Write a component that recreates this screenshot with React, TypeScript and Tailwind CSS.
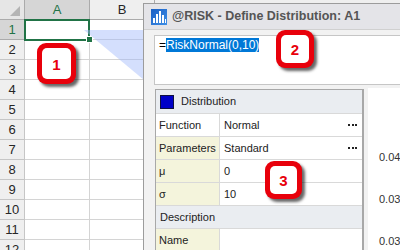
import React from 'react';

const sheetRows = [1, 2, 3, 4, 5, 6, 7, 8, 9, 10, 11, 12];

const props = [
  { label: 'Function', value: 'Normal', more: true, plain: true },
  { label: 'Parameters', value: 'Standard', more: true },
  { label: 'μ', value: '0' },
  { label: 'σ', value: '10' },
];

function Callout({ n, className }: { n: string; className: string }) {
  return (
    <div
      className={`absolute rounded-[9px] bg-[#e8000b] p-[5px] shadow-[3px_3px_3px_rgba(0,0,0,0.6)] ${className}`}
    >
      <div className="flex h-full w-full items-center justify-center rounded-[5px] bg-white pt-[3px] text-[15px] font-bold text-[#e8000b]">
        {n}
      </div>
    </div>
  );
}

function RiskIcon() {
  return (
    <svg width="16" height="16" viewBox="0 0 16 16">
      <defs>
        <linearGradient id="rk" x1="0" y1="0" x2="1" y2="1">
          <stop offset="0" stopColor="#1a5fc4" />
          <stop offset="1" stopColor="#3f8fe6" />
        </linearGradient>
      </defs>
      <rect width="16" height="16" fill="url(#rk)" />
      <rect x="2" y="9" width="2" height="5" fill="#fff" />
      <rect x="5" y="5" width="2" height="9" fill="#fff" />
      <rect x="8" y="2" width="2" height="12" fill="#fff" />
      <rect x="11" y="6" width="2" height="8" fill="#fff" />
      <rect x="14" y="10" width="1" height="4" fill="#fff" />
    </svg>
  );
}

function Dots() {
  return (
    <div className="flex gap-[1.5px]">
      <div className="h-[2px] w-[2px] bg-[#222]" />
      <div className="h-[2px] w-[2px] bg-[#222]" />
      <div className="h-[2px] w-[2px] bg-[#222]" />
    </div>
  );
}

export default function App() {
  return (
    <div className="relative h-[250px] w-[400px] overflow-hidden bg-white font-['Liberation_Sans',Arial,sans-serif]">
      {/* worksheet */}
      <div className="flex h-[20px] border-b border-[#ababab] text-[13px] leading-[19px]">
        <div className="relative w-[25px] border-r border-[#ababab] bg-[#e6e6e6]">
          <div className="absolute bottom-[3px] right-[4px] h-0 w-0 border-b-[10px] border-l-[10px] border-b-[#b4b4b4] border-l-transparent" />
        </div>
        <div className="w-[65px] border-r border-[#ababab] bg-[#d6d6d6] text-center text-[#217346]">A</div>
        <div className="w-[65px] border-r border-[#ababab] bg-[#efefef] text-center text-[#262626]">B</div>
        <div className="flex-1 bg-[#efefef]" />
      </div>
      {sheetRows.map((r) => (
        <div key={r} className="flex h-[20px] text-[13px] leading-[19px]">
          <div
            className={
              r === 1
                ? 'w-[25px] border-b border-r border-[#ababab] bg-[#d6d6d6] text-center text-[#217346]'
                : 'w-[25px] border-b border-r border-[#c6c6c6] bg-[#efefef] text-center text-[#262626]'
            }
          >
            {r}
          </div>
          <div className="w-[65px] border-b border-r border-[#d4d4d4]" />
          <div className="w-[65px] border-b border-r border-[#d4d4d4]" />
          <div className="flex-1 border-b border-[#d4d4d4]" />
        </div>
      ))}

      {/* selection of A1 */}
      <div className="absolute left-[24px] top-[19px] h-[22px] w-[66px] border-2 border-[#217346]" />
      <div className="absolute left-[86px] top-[36px] h-[7px] w-[7px] border border-white bg-[#217346]" />

      {/* reference triangle */}
      <svg className="absolute left-0 top-0" width="150" height="90">
        <polygon points="84,30 150,30 150,85" fill="rgba(160,185,250,0.45)" />
      </svg>

      {/* dialog window */}
      <div className="absolute left-[143px] top-[3px] flex h-[270px] w-[280px] flex-col border border-[#9c9c9c] bg-[#f2f2f2]">
        <div className="flex h-[26px] items-center gap-[5px] border-b border-[#d0d0d0] bg-[#e4e4e8] pl-[7px]">
          <RiskIcon />
          <span className="text-[12.5px] font-bold text-[#555]">@RISK - Define Distribution: A1</span>
        </div>
        <div className="flex flex-1 flex-col gap-[4px] pl-[10px] pt-[5px]">
          <div className="h-[50px] border border-[#c6c6c6] bg-white px-[4px] pt-[2px] text-[12px] leading-[15px] text-black">
            =<span className="bg-[#0078d7] text-white">RiskNormal(0,10)</span>
          </div>
          <div className="flex flex-1 gap-[4px]">
            <div className="ml-[1px] w-[209px] border border-r-2 border-[#a8a8a8] bg-white text-[11px] text-[#222]">
              <div className="flex h-[24px] items-center gap-[7px] border-b border-[#d9d9d9] bg-[#eaedf1] pl-[4px]">
                <div className="h-[14px] w-[14px] border border-[#101040] bg-[#0000c8]" />
                <span>Distribution</span>
              </div>
              {props.map((p) => (
                <div key={p.label} className="flex h-[23px] border-b border-[#d9d9d9]">
                  <div
                    className={
                      p.plain
                        ? 'flex w-[64px] items-center border-r border-[#d9d9d9] bg-white pl-[3px]'
                        : 'flex w-[64px] items-center border-r border-[#d9d9d9] bg-[#f4f4dc] pl-[3px]'
                    }
                  >
                    {p.label}
                  </div>
                  <div className="flex flex-1 items-center justify-between pl-[4px] pr-[5px]">
                    <span>{p.value}</span>
                    {p.more && <Dots />}
                  </div>
                </div>
              ))}
              <div className="flex h-[23px] items-center border-b border-[#d9d9d9] bg-[#eaedf1] pl-[4px]">Description</div>
              <div className="flex h-[23px]">
                <div className="flex w-[64px] items-center border-r border-[#d9d9d9] bg-[#f4f4dc] pl-[3px]">Name</div>
                <div className="flex-1" />
              </div>
            </div>
            <div className="-mt-[1px] flex flex-1 flex-col gap-[28px] bg-white pl-[11px] pt-[62px] text-[11px] leading-[14px] text-[#333]">
              <span>0.04</span>
              <span>0.03</span>
              <span>0.03</span>
            </div>
          </div>
        </div>
      </div>

      {/* callouts */}
      <Callout n="1" className="left-[37px] top-[43px] h-[41px] w-[39px]" />
      <Callout n="2" className="left-[276px] top-[30px] h-[38px] w-[38px]" />
      <Callout n="3" className="left-[265px] top-[161px] h-[38px] w-[37px]" />
    </div>
  );
}
